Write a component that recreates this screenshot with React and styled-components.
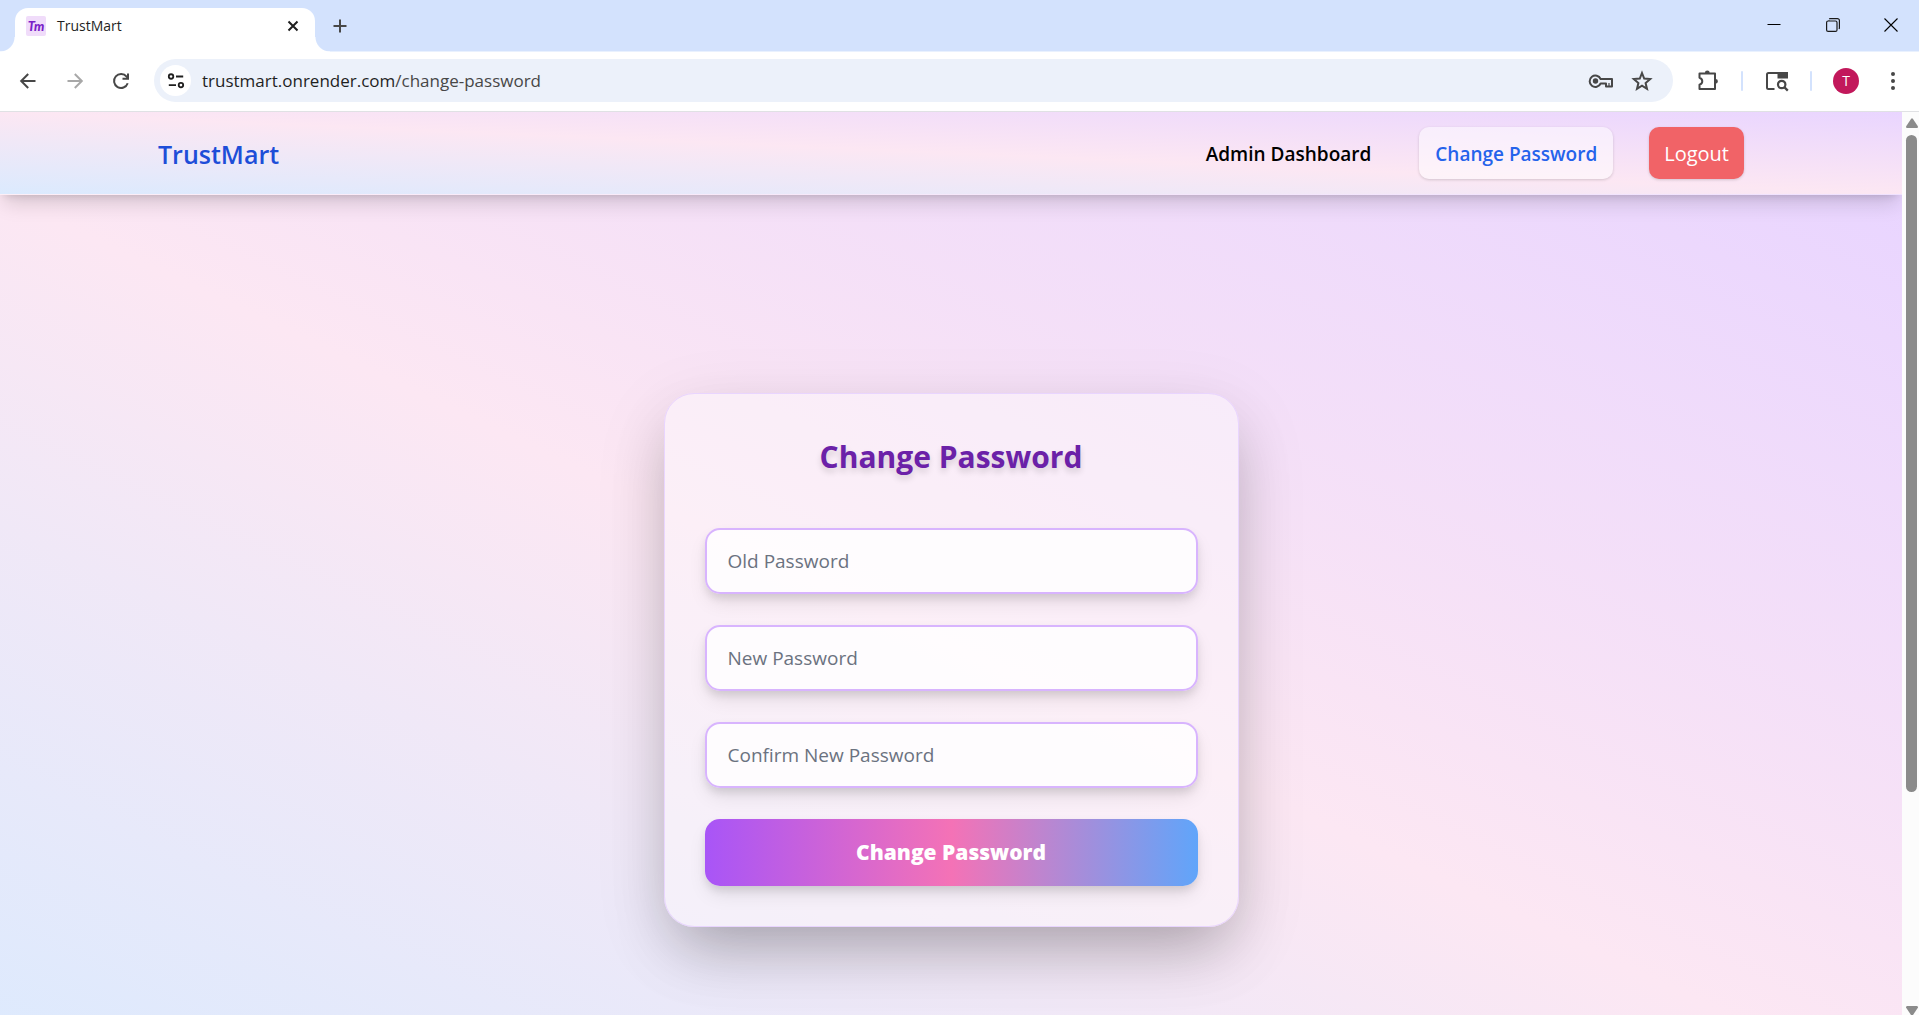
import React, { useState } from "react";
import styled, { createGlobalStyle } from "styled-components";

const GlobalStyle = createGlobalStyle`
  *, *::before, *::after { box-sizing: border-box; }
  body { margin: 0; font-family: "Open Sans", "Noto Sans", sans-serif; }
  button, input { font-family: inherit; }
`;

const Window = styled.div`
  display: flex;
  flex-direction: column;
  height: 100vh;
  overflow: hidden;
  background: #fff;
`;

const TabStrip = styled.header`
  display: flex;
  align-items: flex-end;
  flex: none;
  height: 52px;
  padding-left: 15px;
  background: #d3e2fd;
  border-bottom: 1px solid #e9f1fe;
`;

const Tab = styled.div`
  position: relative;
  display: flex;
  align-items: center;
  gap: 11px;
  width: 300px;
  height: 44px;
  margin-bottom: -1px;
  padding: 0 12px 8px 11px;
  background: #fff;
  border-radius: 13px 13px 0 0;

  &::before,
  &::after {
    content: "";
    position: absolute;
    bottom: 0;
    width: 15px;
    height: 15px;
  }
  &::before {
    right: 100%;
    background: radial-gradient(circle at 0 0, transparent 14px, #fff 15px);
  }
  &::after {
    left: 100%;
    background: radial-gradient(circle at 100% 0, transparent 14px, #fff 15px);
  }
`;

const Favicon = styled.span`
  display: grid;
  place-items: center;
  width: 20px;
  height: 20px;
  border-radius: 2px;
  background: #f0dcfa;
  color: #7a1fc8;
  font: italic 900 13px/20px Lato, sans-serif;
`;

const TabTitle = styled.span`
  flex: 1;
  color: #1f1f1f;
  font-size: 14px;
  line-height: 20px;
`;

const IconButton = styled.button`
  display: grid;
  place-items: center;
  flex: none;
  width: ${(p) => p.$w || 32}px;
  height: ${(p) => p.$h || 32}px;
  padding: 0;
  border: 0;
  border-radius: ${(p) => p.$radius || 0}px;
  background: ${(p) => p.$bg || "transparent"};
  color: ${(p) => p.$color || "#474747"};
  cursor: pointer;
  svg { display: block; }
`;

const NewTab = styled.div`
  align-self: center;
  margin-left: 9px;
`;

const WindowControls = styled.div`
  display: flex;
  align-self: flex-start;
  margin-left: auto;
`;

const Toolbar = styled.div`
  display: flex;
  align-items: center;
  flex: none;
  height: 60px;
  padding: 0 3px 2px 4px;
  border-bottom: 1px solid #e0e1e4;
`;

const NavButtons = styled.div`
  display: flex;
  margin-right: 10px;
`;

const AddressBar = styled.div`
  display: flex;
  align-items: center;
  flex: 1;
  height: 43px;
  padding: 0 13px 0 6px;
  border-radius: 22px;
  background: #ecf1fa;
`;

const Url = styled.span`
  flex: 1;
  margin-left: 11px;
  color: #474747;
  font-size: 17px;
  line-height: 24px;
  strong { color: #1f1f1f; font-weight: 400; }
`;

const ToolbarActions = styled.div`
  display: flex;
  align-items: center;
  padding-left: 12px;
`;

const Divider = styled.span`
  width: 2px;
  height: 20px;
  margin: 0 10px;
  border-radius: 1px;
  background: #d3e2fd;
`;

const Avatar = styled.span`
  display: grid;
  place-items: center;
  width: 26px;
  height: 26px;
  border-radius: 50%;
  background: #c2185b;
  color: #fff;
  font-size: 14px;
`;

const Viewport = styled.div`
  display: flex;
  flex: 1;
  min-height: 0;
`;

const Page = styled.div`
  display: flex;
  flex-direction: column;
  flex: 1;
  min-width: 0;
  overflow: hidden;
`;

const pastel = "linear-gradient(to top right, #dbeafe, #fce7f3, #e9d5ff)";

const NavBar = styled.nav`
  position: relative;
  z-index: 1;
  display: flex;
  align-items: center;
  justify-content: space-between;
  flex: none;
  height: 83px;
  padding: 0 158px;
  background: ${pastel};
  border-bottom: 1px solid rgba(255, 255, 255, 0.3);
  box-shadow: 0 12px 19px -4px rgba(0, 0, 0, 0.15), 0 5px 8px -5px rgba(0, 0, 0, 0.15);
`;

const Brand = styled.a`
  padding-top: 2px;
  color: #1d4ed8;
  font-size: 25px;
  font-weight: 600;
  line-height: 36px;
  text-decoration: none;
`;

const NavLinks = styled.div`
  display: flex;
  align-items: center;
  gap: 32px;
`;

const navItem = `
  display: flex;
  align-items: center;
  height: 52px;
  padding: 2px 16px 0;
  border: 0;
  border-radius: 10px;
  font-size: 19px;
  line-height: 30px;
  font-weight: 600;
`;

const NavLink = styled.a`
  ${navItem}
  color: ${(p) => (p.$active ? "#2563eb" : "#000")};
  background: ${(p) => (p.$active ? "rgba(255, 255, 255, 0.5)" : "transparent")};
  box-shadow: ${(p) => (p.$active ? "0 1px 3px rgba(0, 0, 0, 0.16)" : "none")};
  text-decoration: none;
`;

const LogoutButton = styled.button`
  ${navItem}
  margin-left: 4px;
  padding: 2px 15px 0;
  color: #fff;
  background: #f16367;
  font-size: 20px;
  font-weight: 500;
  box-shadow: 0 1px 3px rgba(0, 0, 0, 0.16);
  cursor: pointer;
`;

const Main = styled.main`
  display: flex;
  align-items: center;
  justify-content: center;
  flex: none;
  min-height: calc(100vh - 112px);
  padding-top: 26px;
  background: ${pastel};
`;

const Card = styled.form`
  display: flex;
  flex-direction: column;
  gap: 31px;
  width: 575px;
  padding: 40px;
  border: 1px solid #e9d5ff;
  border-radius: 30px;
  background: rgba(252, 248, 252, 0.5);
  background-clip: padding-box;
  box-shadow: 0 20px 75px rgba(0, 0, 0, 0.1), 0 31px 62px -15px rgba(0, 0, 0, 0.25);
`;

const Title = styled.h1`
  margin: 0 0 18px;
  color: #6b21a8;
  font-size: 30px;
  font-weight: 700;
  line-height: 45px;
  text-align: center;
  text-shadow: 0 4px 6px rgba(0, 0, 0, 0.15);
`;

const PasswordInput = styled.input`
  width: 100%;
  height: 66px;
  padding: 0 21px;
  border: 2px solid #d8b4fe;
  border-radius: 15px;
  outline: 0;
  background: rgba(255, 255, 255, 0.8);
  color: #1f2937;
  font-size: 19px;
  box-shadow: 0 5px 8px -1px rgba(0, 0, 0, 0.1), 0 10px 20px -3px rgba(0, 0, 0, 0.1);
  &::placeholder { color: #6b7280; opacity: 1; }
`;

const SubmitButton = styled.button`
  height: 67px;
  border: 0;
  border-radius: 15px;
  background: linear-gradient(to right, #a855f7, #f472b6, #60a5fa);
  color: #fff;
  font-size: 21px;
  font-weight: 800;
  box-shadow: 0 5px 8px -1px rgba(0, 0, 0, 0.1), 0 10px 20px -3px rgba(0, 0, 0, 0.1);
  cursor: pointer;
`;

const ScrollTrack = styled.div`
  display: flex;
  flex-direction: column;
  align-items: center;
  justify-content: space-between;
  flex: none;
  width: 17px;
  padding: 6px 0 0 2px;
  background: #fcfcfc;
  svg { display: block; flex: none; }
`;

const ScrollLane = styled.div`
  flex: 1;
  width: 11px;
  padding: 7px 0;
`;

const ScrollThumb = styled.div`
  height: 76%;
  border-radius: 6px;
  background: #8b8b8b;
`;

const Icon = ({ w = 20, h = w, box = "0 0 20 20", sw = 2, children }) => (
  <svg width={w} height={h} viewBox={box} fill="none" stroke="currentColor" strokeWidth={sw} aria-hidden="true">
    {children}
  </svg>
);

const BackIcon = () => (
  <Icon><path d="M17.5 10H4M10.2 3L3.2 10l7 7" /></Icon>
);
const ForwardIcon = () => (
  <Icon><path d="M2.5 10H16M9.800 3l7 7-7 7" /></Icon>
);
const ReloadIcon = () => (
  <Icon>
    <path d="M16.700 12.200A7 7 0 1 1 15.600 5.700L17 7.300" />
    <path d="M17 2.500V7.800H11.500" />
  </Icon>
);
const TuneIcon = () => (
  <Icon w={18}>
    <circle cx="4.500" cy="5" r="2.500" /><path d="M10 5h8M2 14.500h8" /><circle cx="15.500" cy="14.500" r="2.500" />
  </Icon>
);
const KeyIcon = () => (
  <Icon w={26} h={16} box="0 0 26 16">
    <path d="M12.600 6H24v7.500h-6V10.500h-5.400A5.700 5.700 0 1 1 12.600 6z" strokeLinejoin="round" />
    <circle cx="7.500" cy="8" r="2.700" fill="currentColor" stroke="none" />
    <path d="M21 10v3" strokeWidth="1.200" />
  </Icon>
);
const StarIcon = () => (
  <Icon w={24} box="0 0 24 24">
    <path d="M12 4l2.200 5.600 6 .5-4.600 3.900 1.400 5.900L12 16.700l-5 3.200 1.400-5.900L3.800 10.100l6-.5z" />
  </Icon>
);
const PuzzleIcon = () => (
  <Icon w={24} box="0 0 24 24">
    <path d="M3.500 4.500h15.500v15.500H3.500v-4.300c3.700-1.200 3.700-5.700 0-6.900z" strokeLinejoin="round" />
    <path d="M8.900 4a2.400 2.400 0 0 1 4.800 0zM19.500 9.900a2.400 2.400 0 0 1 0 4.800z" fill="currentColor" stroke="none" />
  </Icon>
);
const SideSearchIcon = () => (
  <Icon w={24} box="0 0 24 24">
    <path d="M9.500 20H3.500a1.500 1.500 0 0 1-1.500-1.500V5.500A1.500 1.500 0 0 1 3.500 4H20.500a1.500 1.500 0 0 1 1.500 1.500V9" />
    <path d="M13.500 4h8.500v4.500h-8.500z" fill="currentColor" />
    <circle cx="16.700" cy="15.500" r="3.700" strokeWidth="2.200" /><path d="M19.300 18.100l3.500 3.500" strokeWidth="2.200" />
  </Icon>
);
const DotsIcon = () => (
  <Icon w={20}>
    <g fill="currentColor" stroke="none">
      <circle cx="10" cy="3" r="2" /><circle cx="10" cy="10" r="2" /><circle cx="10" cy="17" r="2" />
    </g>
  </Icon>
);

const fields = ["Old Password", "New Password", "Confirm New Password"];

export default function App() {
  const [values, setValues] = useState({});
  return (
    <Window>
      <GlobalStyle />
      <TabStrip>
        <Tab>
          <Favicon aria-hidden="true">Tm</Favicon>
          <TabTitle>TrustMart</TabTitle>
          <IconButton $w={20} $h={20} $color="#1f1f1f" aria-label="Close tab">
            <Icon w={12} box="0 0 12 12"><path d="M1.500 1.500l9 9M10.500 1.500l-9 9" /></Icon>
          </IconButton>
        </Tab>
        <NewTab>
          <IconButton aria-label="New tab">
            <Icon w={14} box="0 0 14 14"><path d="M7 .5v13M.5 7h13" /></Icon>
          </IconButton>
        </NewTab>
        <WindowControls>
          <IconButton $w={58} $h={50} $color="#000" aria-label="Minimize">
            <Icon w={14} box="0 0 14 14" sw={1}><path d="M.5 6.500h13" /></Icon>
          </IconButton>
          <IconButton $w={60} $h={50} $color="#1a1a1a" aria-label="Restore">
            <Icon w={14} box="0 0 14 14" sw={1.2}>
              <rect x=".6" y="3" width="10.400" height="10.400" rx="1.500" />
              <path d="M3 3V2.600M3.200 1A2 2 0 0 1 4 .6h7.400a2 2 0 0 1 2 2V10a2 2 0 0 1-.4 1" />
            </Icon>
          </IconButton>
          <IconButton $w={56} $h={50} $color="#000" aria-label="Close">
            <Icon w={14} box="0 0 14 14" sw={1.1}><path d="M.5 .5l13 13M13.500 .5l-13 13" /></Icon>
          </IconButton>
        </WindowControls>
      </TabStrip>

      <Toolbar>
        <NavButtons>
          <IconButton $w={47} aria-label="Back"><BackIcon /></IconButton>
          <IconButton $w={47} $color="#a8a8a8" aria-label="Forward"><ForwardIcon /></IconButton>
          <IconButton $w={46} aria-label="Reload"><ReloadIcon /></IconButton>
        </NavButtons>
        <AddressBar>
          <IconButton $w={31} $h={31} $radius={16} $bg="#fff" $color="#1f1f1f" aria-label="Site information"><TuneIcon /></IconButton>
          <Url><strong>trustmart.onrender.com</strong>/change-password</Url>
          <IconButton $w={46} aria-label="Manage passwords"><KeyIcon /></IconButton>
          <IconButton $w={36} aria-label="Bookmark this page"><StarIcon /></IconButton>
        </AddressBar>
        <ToolbarActions>
          <IconButton $w={46} aria-label="Extensions"><PuzzleIcon /></IconButton>
          <Divider />
          <IconButton $w={47} aria-label="Search side panel"><SideSearchIcon /></IconButton>
          <Divider />
          <IconButton $w={48} aria-label="Profile"><Avatar>T</Avatar></IconButton>
          <IconButton $w={46} aria-label="Menu"><DotsIcon /></IconButton>
        </ToolbarActions>
      </Toolbar>

      <Viewport>
        <Page>
          <NavBar>
            <Brand href="#home">TrustMart</Brand>
            <NavLinks>
              <NavLink href="#admin">Admin Dashboard</NavLink>
              <NavLink href="#change-password" $active>Change Password</NavLink>
              <LogoutButton>Logout</LogoutButton>
            </NavLinks>
          </NavBar>
          <Main>
            <Card onSubmit={(e) => e.preventDefault()}>
              <Title>Change Password</Title>
              {fields.map((label) => (
                <PasswordInput
                  key={label}
                  type="password"
                  aria-label={label}
                  placeholder={label}
                  value={values[label] || ""}
                  onChange={(e) => setValues({ ...values, [label]: e.target.value })}
                />
              ))}
              <SubmitButton type="submit">Change Password</SubmitButton>
            </Card>
          </Main>
        </Page>
        <ScrollTrack aria-hidden="true">
          <svg width="12" height="10" viewBox="0 0 12 10" fill="#8b8b8b"><path d="M5 1q1-1.500 2 0l5 7.500q0 1.500-1 1.500H1q-1 0-1-1.500z" /></svg>
          <ScrollLane><ScrollThumb /></ScrollLane>
          <svg width="12" height="9" viewBox="0 0 12 9" fill="#8b8b8b"><path d="M5 9h2l5-7.500Q12 0 11 0H1Q0 0 0 1.500z" /></svg>
        </ScrollTrack>
      </Viewport>
    </Window>
  );
}
